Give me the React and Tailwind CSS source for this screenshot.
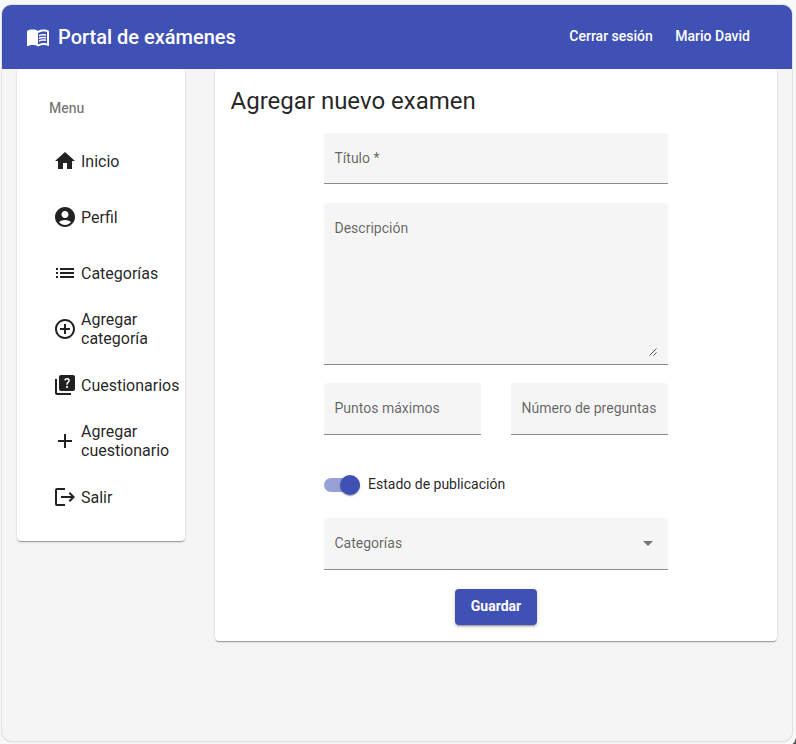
import React from "react";
import {
  MdHome,
  MdAccountCircle,
  MdList,
  MdAddCircleOutline,
  MdQuiz,
  MdAdd,
  MdLogout,
} from "react-icons/md";

const menu = [
  { icon: MdHome, label: "Inicio" },
  { icon: MdAccountCircle, label: "Perfil" },
  { icon: MdList, label: "Categorías" },
  { icon: MdAddCircleOutline, label: "Agregar categoría" },
  { icon: MdQuiz, label: "Cuestionarios" },
  { icon: MdAdd, label: "Agregar cuestionario" },
  { icon: MdLogout, label: "Salir" },
];

const cardShadow =
  "shadow-[0_2px_1px_-1px_rgba(0,0,0,0.2),0_1px_1px_0_rgba(0,0,0,0.14),0_1px_3px_0_rgba(0,0,0,0.12)]";

// Open book: solid left page, outlined right page with three text lines.
function BookIcon() {
  return (
    <svg viewBox="0 0 24 24" className="size-6" fill="currentColor">
      <path d="M21 5c-1.11-.35-2.33-.5-3.5-.5-1.95 0-4.05.4-5.5 1.5-1.45-1.1-3.55-1.5-5.5-1.5S2.45 4.9 1 6v14.65c0 .25.25.5.5.5.1 0 .15-.05.25-.05C3.1 20.45 5.05 20 6.5 20c1.95 0 4.05.4 5.5 1.5 1.35-.85 3.8-1.5 5.5-1.5 1.65 0 3.35.3 4.75 1.05.1.05.15.05.25.05.25 0 .5-.25.5-.5V6c-.6-.45-1.25-.75-2-1zm0 13.5c-1.1-.35-2.3-.5-3.5-.5-1.7 0-4.15.65-5.5 1.5V8c1.35-.85 3.8-1.5 5.5-1.5 1.2 0 2.4.15 3.5.5v11.5z" />
      <path d="M17.5 10.5c.88 0 1.73.09 2.5.26V9.24c-.79-.15-1.64-.24-2.5-.24-1.7 0-3.24.29-4.5.83v1.66c1.13-.64 2.7-.99 4.5-.99zM13 12.49v1.66c1.13-.64 2.7-.99 4.5-.99.88 0 1.73.09 2.5.26V11.9c-.79-.15-1.64-.24-2.5-.24-1.7 0-3.24.3-4.5.83zm4.5 1.84c-1.7 0-3.24.29-4.5.83v1.66c1.13-.64 2.7-.99 4.5-.99.88 0 1.73.09 2.5.26v-1.52c-.79-.16-1.64-.24-2.5-.24z" />
    </svg>
  );
}

function Field({ label, className = "", children }) {
  return (
    <div
      className={`flex justify-between rounded-t border-b border-[#8c8c8c] bg-[#f5f5f5] pl-[10.5px] pt-[15px] text-sm leading-5 text-black/60 ${className}`}
    >
      <span className="whitespace-nowrap">{label}</span>
      {children}
    </div>
  );
}

export default function App() {
  return (
    <div className="relative h-[744px] w-[796px] overflow-hidden bg-[#f8f8f8] pl-[2px] pt-[5px] font-['Roboto',sans-serif]">
      <div className="h-[736px] w-[790px] overflow-hidden rounded-[9px] bg-[#f5f5f5] shadow-[0_0_0_1px_#e2e2e2,0_1px_1px_#c8c8c8]">
        <header className="flex h-16 items-center bg-[#3f51b5] pl-6 pr-[42px] text-white">
          <BookIcon />
          <h1 className="ml-2 text-xl font-medium leading-8">Portal de exámenes</h1>
          <nav className="ml-auto flex gap-[22.5px] pb-[2px] text-sm font-medium">
            <a>Cerrar sesión</a>
            <a>Mario David</a>
          </nav>
        </header>

        <div className="flex items-start gap-[30px] pl-[15px]">
          <aside className={`h-[472px] w-[168px] rounded bg-white pt-[27px] ${cardShadow}`}>
            <div className="pl-8 text-sm font-medium leading-6 text-black/54">Menu</div>
            <ul className="pt-[13px]">
              {menu.map(({ icon: Icon, label }) => (
                <li key={label} className="flex h-14 items-center pl-9 text-black/87">
                  <Icon className="size-6 shrink-0" />
                  <span className="ml-1 text-base leading-[19px]">{label}</span>
                </li>
              ))}
            </ul>
          </aside>

          <main className={`h-[572px] w-[562px] rounded bg-white px-4 pt-4 ${cardShadow}`}>
            <h2 className="-ml-[0.5px] text-2xl leading-8 text-black/87">Agregar nuevo examen</h2>
            <form className="mx-auto mt-4 flex w-[344px] flex-col">
              <Field label="Título *" className="h-[51px]" />
              <Field label="Descripción" className="mt-[19px] h-[162px]">
                <svg viewBox="0 0 8 8" className="mb-[8px] mr-[11px] size-2 self-end" fill="none" stroke="#444" strokeWidth="0.9">
                  <path d="M0.5 7.5 7.5 0.5M4.5 7.5 7.5 4.5" />
                </svg>
              </Field>
              <div className="mt-[18px] flex gap-[30px]">
                <Field label="Puntos máximos" className="h-[52px] w-[157px]" />
                <Field label="Número de preguntas" className="h-[52px] w-[157px]" />
              </div>
              <div className="mt-[37px] flex h-6 items-center">
                <div className="mt-[2px] flex h-[14px] w-9 items-center justify-end rounded-full bg-[#3f51b5]/54">
                  <div className="size-5 shrink-0 rounded-full bg-[#3f51b5] shadow-[0_2px_1px_-1px_rgba(0,0,0,0.2),0_1px_1px_0_rgba(0,0,0,0.14),0_1px_3px_0_rgba(0,0,0,0.12)]" />
                </div>
                <span className="ml-2 text-sm text-black/87">Estado de publicación</span>
              </div>
              <Field label="Categorías" className="mt-[22px] h-[52px]">
                <svg viewBox="0 0 10 5" className="mr-[15px] mt-[8px] h-[5px] w-[10px]">
                  <path d="M0 0h10L5 5z" fill="#757575" />
                </svg>
              </Field>
              <button
                type="button"
                className="mx-auto mt-[19px] h-9 w-[82px] rounded bg-[#3f51b5] pb-[2px] text-sm font-bold text-white shadow-[0_3px_1px_-2px_rgba(0,0,0,0.2),0_2px_2px_0_rgba(0,0,0,0.14),0_1px_5px_0_rgba(0,0,0,0.12)]"
              >
                Guardar
              </button>
            </form>
          </main>
        </div>
      </div>
      <svg viewBox="0 0 4 6" className="absolute bottom-0 right-0 h-[6px] w-1">
        <path d="M4 0V6H0.5Q3 4 4 0z" fill="#555" />
      </svg>
    </div>
  );
}
